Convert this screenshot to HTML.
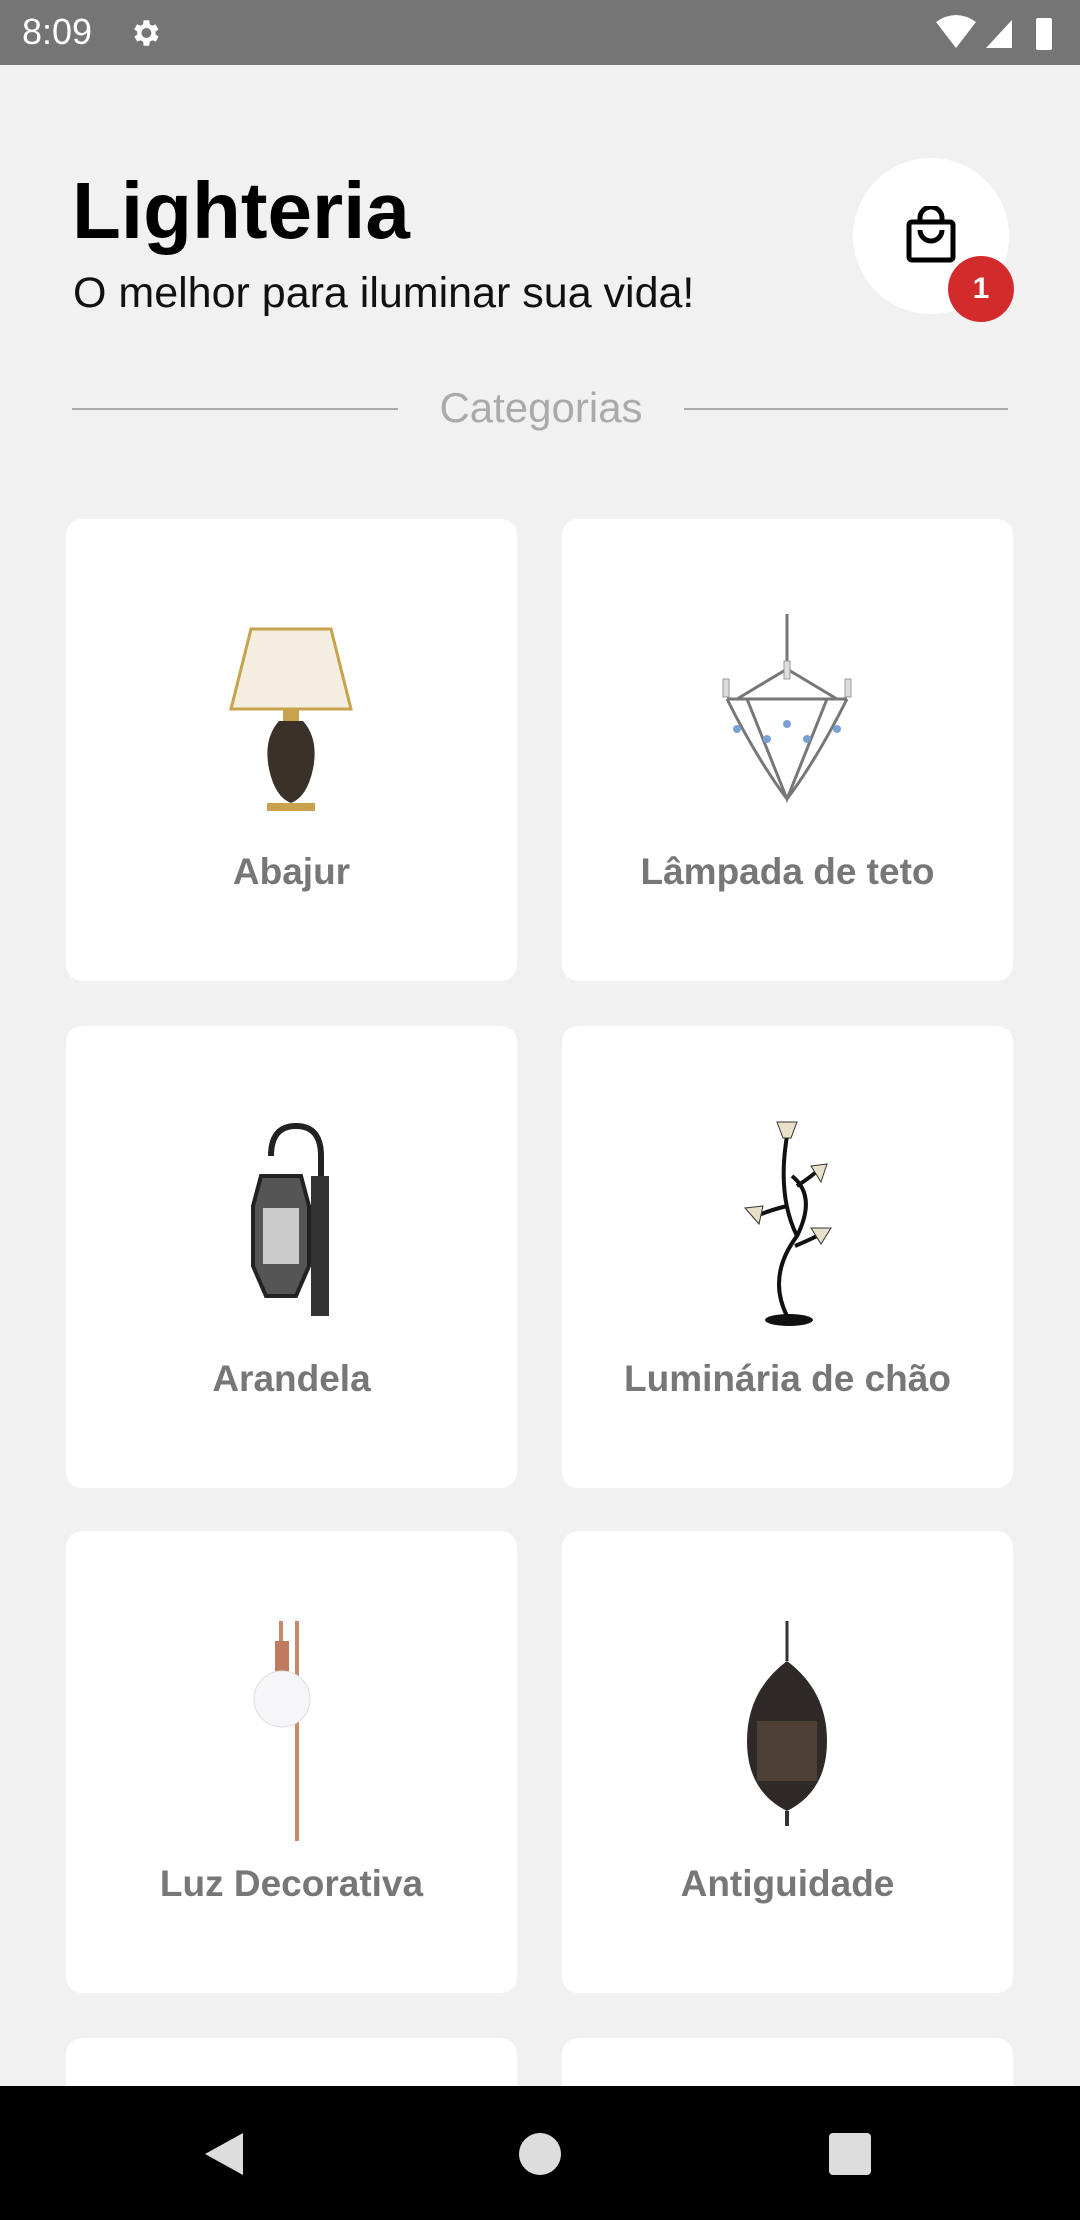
<!DOCTYPE html>
<html><head><meta charset="utf-8"><style>
*{margin:0;padding:0;box-sizing:border-box}
html,body{width:1080px;height:2220px;overflow:hidden}
body{background:#f2f1f2;font-family:"Liberation Sans",sans-serif}
#w{position:relative;width:1080px;height:2220px;overflow:hidden;background:#f2f1f2}
.sb{position:absolute;left:0;top:0;width:1080px;height:65px;background:#757575;color:#fff;font-size:36px}
.title{position:absolute;left:72px;top:171px;font-size:80px;font-weight:bold;color:#000;line-height:1}
.sub{position:absolute;left:73px;top:272px;font-size:43px;color:#111;line-height:1}
.cart{position:absolute;left:853px;top:158px;width:156px;height:156px;border-radius:50%;background:#fff}
.badge{position:absolute;left:948px;top:256px;width:66px;height:66px;border-radius:50%;background:#d32b2b;color:#fff;font-size:30px;font-weight:bold;text-align:center;line-height:66px}
.line{position:absolute;top:408px;height:2px;background:#aaa}
.cat{position:absolute;left:400px;width:282px;top:384px;text-align:center;font-size:42px;color:#aaa}
.card{position:absolute;width:451px;height:462px;background:#fff;border-radius:16px}
.card .lb{position:absolute;left:0;right:0;top:332px;text-align:center;font-size:37px;font-weight:bold;color:#777}
.card svg{position:absolute;left:125px;top:90px}
.nav{position:absolute;left:0;top:2086px;width:1080px;height:134px;background:#000}
</style></head><body><div id="w">
<div class="sb"><span style="position:absolute;left:22px;top:11px">8:09</span>
<svg style="position:absolute;left:128px;top:16px" width="34" height="34" viewBox="0 0 24 24"><path fill="#fff" d="M19.4 13a7 7 0 000-2l2.1-1.6-2-3.5-2.5 1a7 7 0 00-1.7-1L15 3h-4l-.4 2.9a7 7 0 00-1.7 1l-2.5-1-2 3.5L6.6 11a7 7 0 000 2l-2.1 1.6 2 3.5 2.5-1a7 7 0 001.7 1L11 21h4l.4-2.9a7 7 0 001.7-1l2.5 1 2-3.5zM13 15.5a3.5 3.5 0 110-7 3.5 3.5 0 010 7z"/></svg>
<svg style="position:absolute;left:936px;top:14px" width="124" height="38" viewBox="0 0 124 38"><path fill="#fff" d="M0 8Q20-6 40 8L20 34z"/><path fill="#fff" d="M50 34L76 6V34z"/><rect x="100" y="4" width="16" height="32" rx="2" fill="#fff"/></svg>
</div>
<div class="title">Lighteria</div>
<div class="sub">O melhor para iluminar sua vida!</div>
<div class="cart"><svg style="position:absolute;left:52px;top:48px" width="52" height="58" viewBox="0 0 52 58"><rect x="4" y="16" width="44" height="38" rx="3" fill="none" stroke="#000" stroke-width="5"/><path d="M15 16V12a11 11 0 0122 0v4M15 24a11 11 0 0022 0" fill="none" stroke="#000" stroke-width="5"/></svg></div>
<div class="badge">1</div>
<div class="line" style="left:72px;width:326px"></div>
<div class="line" style="left:684px;width:324px"></div>
<div class="cat">Categorias</div>

<div class="card" style="left:66px;top:519px"><svg width="200" height="210" viewBox="0 0 200 210"><path d="M60 20H140L160 100H40Z" fill="#f3eee0" stroke="#c9a24e" stroke-width="3"/><rect x="92" y="100" width="16" height="12" fill="#c9a24e"/><path d="M88 112H112Q128 130 122 160Q116 188 100 194Q84 188 78 160Q72 130 88 112Z" fill="#3a3128"/><rect x="76" y="194" width="48" height="8" fill="#c9a24e"/></svg><div class="lb">Abajur</div></div>
<div class="card" style="left:562px;top:519px"><svg width="200" height="210" viewBox="0 0 200 210"><path d="M100 5V60M40 90Q70 150 100 190Q130 150 160 90M60 90Q80 140 100 190Q120 140 140 90M40 90H160M100 60L50 90M100 60L150 90" fill="none" stroke="#777" stroke-width="3"/><g fill="#7aa0d8"><circle cx="50" cy="120" r="4"/><circle cx="80" cy="130" r="4"/><circle cx="120" cy="130" r="4"/><circle cx="150" cy="120" r="4"/><circle cx="100" cy="115" r="4"/></g><g fill="#ddd" stroke="#999"><rect x="36" y="70" width="6" height="18"/><rect x="158" y="70" width="6" height="18"/><rect x="97" y="52" width="6" height="18"/></g></svg><div class="lb">Lâmpada de teto</div></div>

<div class="card" style="left:66px;top:1026px"><svg width="200" height="210" viewBox="0 0 200 210"><path d="M80 40Q80 10 105 10Q130 10 130 40V190" fill="none" stroke="#222" stroke-width="6"/><path d="M120 60H138V200H120Z" fill="#333"/><path d="M70 60H110L118 90V150L105 180H75L62 150V90Z" fill="#555" stroke="#222" stroke-width="4"/><path d="M72 92H108V148H72Z" fill="#ccc"/></svg><div class="lb">Arandela</div></div>
<div class="card" style="left:562px;top:1026px"><svg width="200" height="220" viewBox="0 0 200 220"><path d="M100 20Q90 80 110 120Q80 160 100 200M110 120Q130 80 105 60M100 90Q80 95 70 100M110 70Q125 60 130 55M108 130Q120 125 130 120" fill="none" stroke="#111" stroke-width="4"/><g fill="#e8e0c8" stroke="#333"><path d="M90 6H110L104 22H96Z"/><path d="M58 92L76 90L72 108Z"/><path d="M124 50L140 48L134 66Z"/><path d="M124 112L144 112L134 128Z"/></g><ellipse cx="102" cy="204" rx="24" ry="6" fill="#111"/></svg><div class="lb">Luminária de chão</div></div>

<div class="card" style="left:66px;top:1531px"><svg width="200" height="220" viewBox="0 0 200 220"><rect x="104" y="0" width="4" height="220" fill="#c98a6a"/><rect x="88" y="0" width="4" height="20" fill="#c98a6a"/><rect x="84" y="20" width="14" height="35" fill="#c07a60"/><circle cx="91" cy="78" r="28" fill="#f6f6f8" stroke="#ddd"/></svg><div class="lb">Luz Decorativa</div></div>
<div class="card" style="left:562px;top:1531px"><svg width="200" height="220" viewBox="0 0 200 220"><path d="M100 0V40" stroke="#333" stroke-width="3"/><path d="M100 40Q60 70 60 120Q60 170 100 190Q140 170 140 120Q140 70 100 40Z" fill="#2f2a28"/><path d="M70 100H130V160H70Z" fill="#5b4a3a" opacity=".7"/><path d="M100 190V205" stroke="#333" stroke-width="4"/></svg><div class="lb">Antiguidade</div></div>

<div class="card" style="left:66px;top:2038px;height:100px"></div>
<div class="card" style="left:562px;top:2038px;height:100px"></div>
<div class="nav">
<svg style="position:absolute;left:203px;top:45px" width="42" height="46" viewBox="0 0 42 46"><path d="M40 2V44L2 23Z" fill="#ddd"/></svg>
<div style="position:absolute;left:519px;top:47px;width:42px;height:42px;border-radius:50%;background:#ddd"></div>
<div style="position:absolute;left:829px;top:47px;width:42px;height:42px;border-radius:4px;background:#ddd"></div>
</div>
</div></body></html>
